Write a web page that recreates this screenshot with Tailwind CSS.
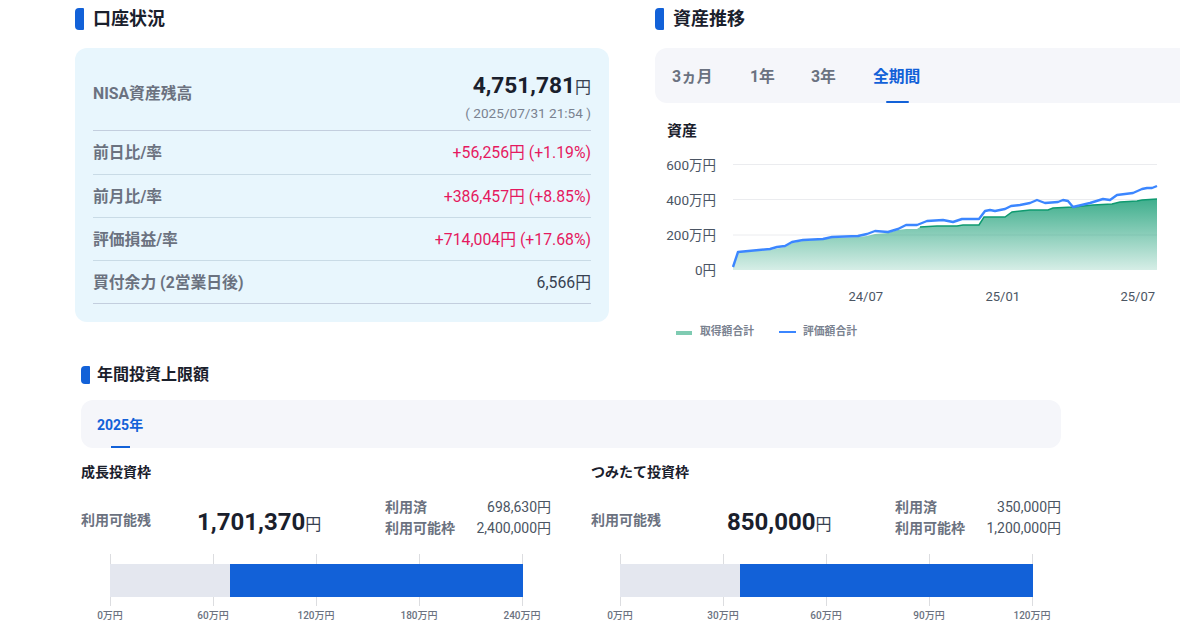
<!DOCTYPE html>
<html lang="ja">
<head>
    <meta charset="UTF-8" />
    <title>NISA口座</title>
    <script src="https://cdn.jsdelivr.net/npm/@tailwindcss/browser@4"></script>
</head>
<body class="bg-white">
<main class="w-[1200px] h-[630px] overflow-hidden font-['Roboto','Noto_Sans_CJK_JP',sans-serif] text-[#1a202c]">

    <!-- top row -->
    <div class="flex pl-[75px] pr-[20px] pt-2 h-[357px]">
        <section class="w-[534px] mr-[46px] shrink-0">
            <h2 class="flex items-center h-[22px] gap-[9px] text-[18px] leading-[22px] font-bold">
                <span class="w-[9px] h-[22px] rounded-l-[4px] rounded-r-[1px] bg-[#1261d8]"></span>口座状況
            </h2>
            <div class="mt-[18px] h-[274px] rounded-xl bg-[#e8f6fd] px-[18px] text-[15.8px]">
                <div class="flex justify-between items-center h-[83px] pt-[14px] border-b border-[#c3cede]">
                    <span class="font-bold text-[#6b7280] -mt-[4px]">NISA資産残高</span>
                    <div class="text-right">
                        <div class="text-[22.7px] leading-[28px] font-bold">4,751,781<span class="text-[16px] font-normal text-[#374151]">円</span></div>
                        <div class="mt-[3px] text-[13.6px] leading-4 text-[#7a8290]">( 2025/07/31 21:54 )</div>
                    </div>
                </div>
                <div class="flex justify-between items-center h-[44px] pt-[1px] border-b border-[#c9dbe6]">
                    <span class="font-bold text-[#6b7280]">前日比/率</span>
                    <span class="text-[#e5195f]">+56,256円 (+1.19%)</span>
                </div>
                <div class="flex justify-between items-center h-[43px] pt-[1px] border-b border-[#c9dbe6]">
                    <span class="font-bold text-[#6b7280]">前月比/率</span>
                    <span class="text-[#e5195f]">+386,457円 (+8.85%)</span>
                </div>
                <div class="flex justify-between items-center h-[43px] pt-[1px] border-b border-[#c9dbe6]">
                    <span class="font-bold text-[#6b7280]">評価損益/率</span>
                    <span class="text-[#e5195f]">+714,004円 (+17.68%)</span>
                </div>
                <div class="flex justify-between items-center h-[43px] pt-[1px] border-b border-[#c3cede]">
                    <span class="font-bold text-[#6b7280]">買付余力 (2営業日後)</span>
                    <span class="text-[#374151]">6,566円</span>
                </div>
            </div>
        </section>

        <section class="flex-1 min-w-0">
            <h2 class="flex items-center h-[22px] gap-[9px] text-[18px] leading-[22px] font-bold">
                <span class="w-[9px] h-[22px] rounded-l-[4px] rounded-r-[1px] bg-[#1261d8]"></span>資産推移
            </h2>
            <div class="relative mt-[18px] h-[55px] rounded-l-xl bg-[#f5f6fa] flex items-center pl-[17px] pt-[2px] text-[15.8px] font-bold text-[#6b7280]">
                <span class="w-[78px]">3ヵ月</span>
                <span class="w-[61px]">1年</span>
                <span class="w-[62px]">3年</span>
                <span class="text-[#1261d8]">全期間</span>
                <span class="absolute left-[231px] bottom-0 w-[23px] h-[2px] rounded-full bg-[#1261d8]"></span>
            </div>
            <h3 class="mt-[18px] ml-3 text-[15px] leading-5 font-bold">資産</h3>
            <svg class="mt-[12px] -ml-[5px]" width="530" height="197" viewBox="650 153 530 197">
                <defs>
                    <linearGradient id="area" gradientUnits="userSpaceOnUse" x1="0" y1="199" x2="0" y2="270">
                        <stop offset="0" stop-color="#0f9a70" stop-opacity="0.8" />
                        <stop offset="1" stop-color="#0f9a70" stop-opacity="0.17" />
                    </linearGradient>
                </defs>
                <g stroke="#ebecef" stroke-width="1">
                    <line x1="733" y1="164.5" x2="1157" y2="164.5" />
                    <line x1="733" y1="199.5" x2="1157" y2="199.5" />
                    <line x1="733" y1="235" x2="1157" y2="235" />
                </g>
                <g font-size="13.5" fill="#4b5563" text-anchor="end">
                    <text x="716" y="170">600万円</text>
                    <text x="716" y="205">400万円</text>
                    <text x="716" y="240">200万円</text>
                    <text x="716" y="275">0円</text>
                </g>
                <g font-size="13" fill="#4b5563" text-anchor="end">
                    <text x="883" y="301">24/07</text>
                    <text x="1020" y="301">25/01</text>
                    <text x="1155" y="301">25/07</text>
                </g>
                <path fill="url(#area)" d="M733 267L738 252L770 250L785 247L792 243L803 241L823 239L832 238L858 237L867 236L875 234L888 233L898 230L906 229L917 229L920 227L937 226L957 226L963 225L979 225L984 217L1005 217L1012 212L1030 210L1048 210L1053 208L1073 207L1093 205L1112 204L1120 202L1137 201L1142 200L1157 199L1157 270L733 270Z" />
                <path fill="none" stroke="#0f9a70" stroke-width="1.5" d="M920 227L937 226L957 226L963 225L979 225L984 217L1005 217L1012 212L1030 210L1048 210L1053 208L1073 207L1093 205L1112 204L1120 202L1137 201L1142 200L1157 199" />
                <path fill="none" stroke="#3b86ff" stroke-width="2.4" stroke-linejoin="round" d="M733 267L738 252L770 249L777 247L785 246L792 242L803 240L823 239L832 237L858 236L867 234L875 231L888 232L898 229L906 225L917 225L927 221L943 220L953 222L962 219L979 219L985 211L990 210L995 211L1005 209L1011 206L1020 205L1030 203L1037 200L1045 203L1058 202L1063 200L1068 201L1073 207L1090 203L1103 199L1110 200L1117 195L1133 193L1142 189L1147 188L1152 188L1157 186" />
                <rect x="676" y="331" width="16" height="4" fill="#7fcbb2" />
                <rect x="779" y="331" width="17" height="2" fill="#3b86ff" />
                <g font-size="10.8" font-weight="700" fill="#7a8290">
                    <text x="700" y="335">取得額合計</text>
                    <text x="803" y="335">評価額合計</text>
                </g>
            </svg>
        </section>
    </div>

    <!-- annual limit -->
    <section class="pl-[81px] w-[1061px]">
        <h2 class="flex items-center h-[18px] mt-[9px] gap-[7px] text-[16px] leading-[18px] font-bold">
            <span class="w-[9px] h-[18px] rounded-l-[4px] rounded-r-[1px] bg-[#1261d8]"></span>年間投資上限額
        </h2>
        <div class="relative mt-[16px] h-[48px] rounded-xl bg-[#f5f6fa] flex items-center pl-4 pt-[3px] text-[14px] font-bold text-[#1261d8]">
            2025年
            <span class="absolute left-[30px] bottom-0 w-[19px] h-[2px] bg-[#1261d8]"></span>
        </div>

        <div class="grid grid-cols-2 gap-x-[40px] mt-[15px]">
            <div>
                <h3 class="text-[14px] leading-[18px] font-bold">成長投資枠</h3>
                <div class="flex items-start mt-[16px] h-[42px]">
                    <span class="w-[116px] mt-[13px] text-[14px] leading-5 font-bold text-[#6b7280]">利用可能残</span>
                    <span class="w-[188px] mt-[9px] text-[24px] leading-8 font-bold">1,701,370<span class="text-[16px] font-normal text-[#374151]">円</span></span>
                    <div class="flex-1 text-[14px] leading-[21px] text-[#4b5563]">
                        <div class="flex justify-between"><span class="font-bold text-[#6b7280]">利用済</span><span>698,630円</span></div>
                        <div class="flex justify-between"><span class="font-bold text-[#6b7280]">利用可能枠</span><span>2,400,000円</span></div>
                    </div>
                </div>
                <div class="relative ml-[29px] w-[413px] h-[52px] mt-[15px]">
                    <div class="absolute inset-0 flex justify-between">
                        <span class="relative w-px h-full bg-[#dcdde0]"><span class="absolute left-0 top-[56px] -translate-x-1/2 whitespace-nowrap text-[10px] leading-[11px] font-medium text-[#6b7280]">0万円</span></span>
                        <span class="relative w-px h-full bg-[#dcdde0]"><span class="absolute left-0 top-[56px] -translate-x-1/2 whitespace-nowrap text-[10px] leading-[11px] font-medium text-[#6b7280]">60万円</span></span>
                        <span class="relative w-px h-full bg-[#dcdde0]"><span class="absolute left-0 top-[56px] -translate-x-1/2 whitespace-nowrap text-[10px] leading-[11px] font-medium text-[#6b7280]">120万円</span></span>
                        <span class="relative w-px h-full bg-[#dcdde0]"><span class="absolute left-0 top-[56px] -translate-x-1/2 whitespace-nowrap text-[10px] leading-[11px] font-medium text-[#6b7280]">180万円</span></span>
                        <span class="relative w-px h-full bg-[#dcdde0]"><span class="absolute left-0 top-[56px] -translate-x-1/2 whitespace-nowrap text-[10px] leading-[11px] font-medium text-[#6b7280]">240万円</span></span>
                    </div>
                    <div class="absolute left-0 right-0 top-[10px] h-[33px] flex">
                        <div class="w-[120px] bg-[#e4e7ef]"></div>
                        <div class="flex-1 bg-[#1261d8]"></div>
                    </div>
                </div>
            </div>

            <div>
                <h3 class="text-[14px] leading-[18px] font-bold">つみたて投資枠</h3>
                <div class="flex items-start mt-[16px] h-[42px]">
                    <span class="w-[136px] mt-[13px] text-[14px] leading-5 font-bold text-[#6b7280]">利用可能残</span>
                    <span class="w-[168px] mt-[9px] text-[24px] leading-8 font-bold">850,000<span class="text-[16px] font-normal text-[#374151]">円</span></span>
                    <div class="flex-1 text-[14px] leading-[21px] text-[#4b5563]">
                        <div class="flex justify-between"><span class="font-bold text-[#6b7280]">利用済</span><span>350,000円</span></div>
                        <div class="flex justify-between"><span class="font-bold text-[#6b7280]">利用可能枠</span><span>1,200,000円</span></div>
                    </div>
                </div>
                <div class="relative ml-[29px] w-[413px] h-[52px] mt-[15px]">
                    <div class="absolute inset-0 flex justify-between">
                        <span class="relative w-px h-full bg-[#dcdde0]"><span class="absolute left-0 top-[56px] -translate-x-1/2 whitespace-nowrap text-[10px] leading-[11px] font-medium text-[#6b7280]">0万円</span></span>
                        <span class="relative w-px h-full bg-[#dcdde0]"><span class="absolute left-0 top-[56px] -translate-x-1/2 whitespace-nowrap text-[10px] leading-[11px] font-medium text-[#6b7280]">30万円</span></span>
                        <span class="relative w-px h-full bg-[#dcdde0]"><span class="absolute left-0 top-[56px] -translate-x-1/2 whitespace-nowrap text-[10px] leading-[11px] font-medium text-[#6b7280]">60万円</span></span>
                        <span class="relative w-px h-full bg-[#dcdde0]"><span class="absolute left-0 top-[56px] -translate-x-1/2 whitespace-nowrap text-[10px] leading-[11px] font-medium text-[#6b7280]">90万円</span></span>
                        <span class="relative w-px h-full bg-[#dcdde0]"><span class="absolute left-0 top-[56px] -translate-x-1/2 whitespace-nowrap text-[10px] leading-[11px] font-medium text-[#6b7280]">120万円</span></span>
                    </div>
                    <div class="absolute left-0 right-0 top-[10px] h-[33px] flex">
                        <div class="w-[120px] bg-[#e4e7ef]"></div>
                        <div class="flex-1 bg-[#1261d8]"></div>
                    </div>
                </div>
            </div>
        </div>
    </section>
</main>
</body>
</html>
